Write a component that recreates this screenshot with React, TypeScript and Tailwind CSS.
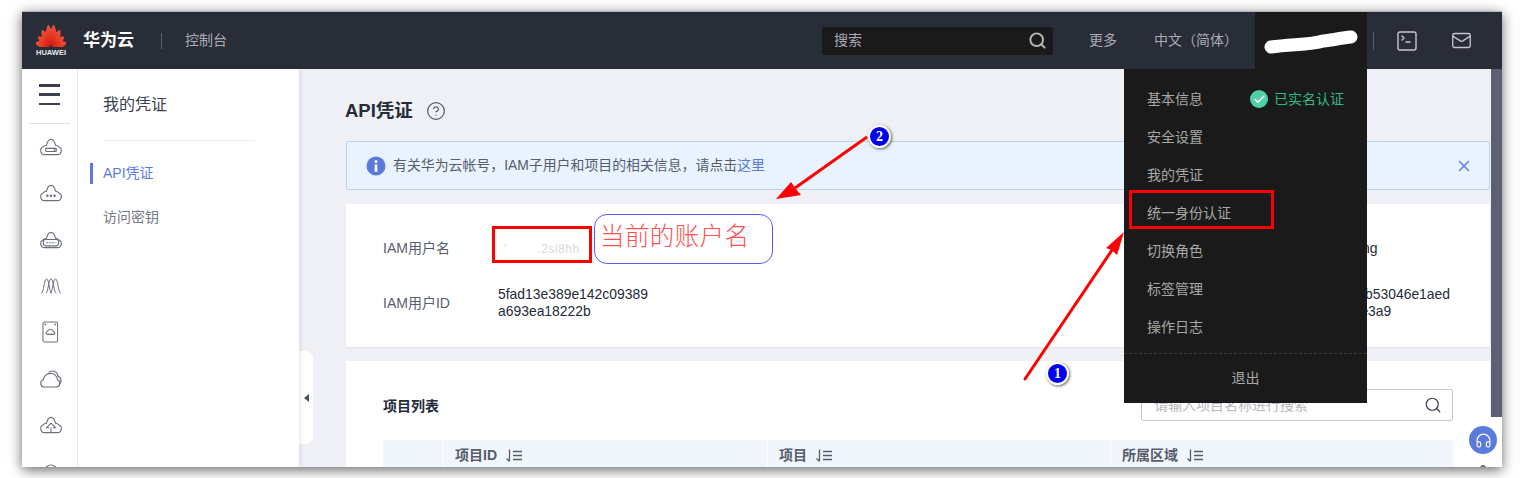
import { Search, SquareTerminal, Mail, CircleHelp, X, Check, Headphones } from "lucide-react";

const stroke = "#6a6e7a";

function Cloud({ children }: { children?: React.ReactNode }) {
  return (
    <svg width="24" height="18" viewBox="0 0 26 20" fill="none" stroke={stroke} strokeWidth="1.200">
      <path d="M6 18.500h14a4.500 4.500 0 0 0 2-8.500C21 8.800 19.500 8 18 8 17 4 15 1.500 13 1.500S9 4 8 8C6.500 8 5 8.800 4 10a4.500 4.500 0 0 0 2 8.500z" />
      {children}
    </svg>
  );
}

const railIcons = [
  <Cloud key="a"><rect x="7" y="11.500" width="12" height="3.500" rx="1" /><circle cx="17" cy="13.200" r="0.400" /></Cloud>,
  <Cloud key="b"><circle cx="9" cy="13" r="0.800" fill={stroke} /><circle cx="13" cy="13" r="0.800" fill={stroke} /><circle cx="17" cy="13" r="0.800" fill={stroke} /></Cloud>,
  <Cloud key="c"><rect x="4.500" y="9.500" width="17" height="7" rx="2.500" /><path d="M8 13h10" strokeDasharray="2 1" /></Cloud>,
  <svg key="d" width="22" height="16" viewBox="0 0 24 18" fill="none" stroke={stroke} strokeWidth="1.100">
    <path d="M1 17C4 17 4 1 7 1s3 16 6 16" />
    <path d="M6 17C9 17 9 1 12 1s3 16 6 16" />
    <path d="M11 17c3 0 3-16 6-16s3 16 6 16" />
  </svg>,
  <svg key="e" width="17" height="22" viewBox="0 0 18 23" fill="none" stroke={stroke} strokeWidth="1.100">
    <rect x="1" y="1" width="15.500" height="21" rx="1.800" />
    <path d="M6 14h6a1.500 1.500 0 0 0 .300-3C11.800 9.500 10.500 8.500 9 8.500S6.200 9.500 5.700 11A1.500 1.500 0 0 0 6 14z" />
    <circle cx="3.500" cy="3.500" r="0.400" /><circle cx="14" cy="3.500" r="0.400" />
  </svg>,
  <svg key="f" width="23" height="18" viewBox="0 0 24 19" fill="none" stroke={stroke} strokeWidth="1.200">
    <path d="M5 18h13a4 4 0 0 0 1.400-7.700C18.800 6.500 15.800 3.500 12 3.500S5 6.500 4.400 10.300A4 4 0 0 0 5 18z" />
    <path d="M10 2.500c1-1 2-1.500 3.500-1.500 3.500 0 6 2.500 6.500 5.500 2.500 1 3.500 3 3 6-.2 1-1 2-2 2.500" />
  </svg>,
  <Cloud key="g"><path d="M13 18.500V13M13 8l-5 5h3M13 8l5 5h-3" /></Cloud>,
  <svg key="h" width="24" height="20" viewBox="0 0 24 20" fill="none" stroke={stroke} strokeWidth="1.200"><circle cx="12" cy="10" r="6" /></svg>,
];

function SortIcon() {
  return (
    <svg width="18" height="13" viewBox="0 0 18 13" fill="none" stroke="#575d6c" strokeWidth="1.300" className="ml-[8px]">
      <path d="M4.500 0.500v11.500M1.500 9.500l3 3" />
      <path d="M8 2.500h9M8 6.500h9M8 10.500h9" />
    </svg>
  );
}

function HuaweiLogo() {
  const angles = [-80, -56, -33, -11, 11, 33, 56, 80];
  return (
    <svg width="30" height="23" viewBox="0 0 30 23" className="block">
      <defs>
        <linearGradient id="pet" x1="0" y1="0" x2="0" y2="1">
          <stop offset="0" stopColor="#f4553a" />
          <stop offset="1" stopColor="#d41a12" />
        </linearGradient>
      </defs>
      {angles.map((a) => {
        const abs = Math.abs(a);
        const d =
          abs < 20
            ? "M0 -1C-5 -7 -5 -15 -1.500 -22C4 -16 4.500 -7 0 -1z"
            : abs < 40
              ? "M0 -1C-5 -6 -5 -13 -1.500 -19C4 -14 4.500 -6 0 -1z"
              : "M0 -1C-5 -5 -5 -11 -1 -16.500C4 -12 4.500 -5 0 -1z";
        return <path key={a} d={d} fill="url(#pet)" transform={`translate(15 22.500) rotate(${a})${a < 0 ? " scale(-1 1)" : ""}`} />;
      })}
    </svg>
  );
}

const menuItems = ["基本信息", "安全设置", "我的凭证", "统一身份认证", "切换角色", "标签管理", "操作日志"];
const columns = [
  { w: "w-[60px]", t: "" },
  { w: "w-[324px]", t: "项目ID" },
  { w: "w-[343px]", t: "项目" },
  { w: "w-[343px]", t: "所属区域" },
];

export default function App() {
  return (
    <div className="relative w-[1521px] h-[478px] overflow-hidden bg-white font-['Liberation_Sans','Noto_Sans_CJK_SC',sans-serif]">
      <div className="absolute left-[22px] top-[11px] w-[1480px] h-[456px] flex flex-col overflow-hidden shadow-[0_3px_12px_rgba(0,0,0,0.6)] border-t border-[#b5b5b5]">
        {/* header */}
        <header className="h-[57px] shrink-0 bg-[#292d38] flex items-center text-[14px] text-[#a9acb4]">
          <div className="ml-[14px] w-[30px] flex flex-col items-center">
            <HuaweiLogo />
            <span className="text-[7.500px] leading-[9px] mt-[1px] text-[#e8e8e8] font-bold">HUAWEI</span>
          </div>
          <span className="ml-[17px] w-[52px] text-[17px] font-bold text-white">华为云</span>
          <span className="ml-[26px] w-px h-[16px] bg-[#5a5e6a]" />
          <span className="ml-[23px] w-[42px]">控制台</span>
          <div className="ml-[595px] w-[231px] h-[28px] rounded-[2px] bg-[#1a1a1a] flex items-center justify-between pl-[12px] pr-[6px]">
            <span>搜索</span>
            <Search size={19} strokeWidth={2.500} className="text-[#b5b5b5]" />
          </div>
          <span className="ml-[36px] w-[28px]">更多</span>
          <span className="ml-[37px] w-[101px]">中文（简体）</span>
          <div className="w-[112px] shrink-0" />
          <span className="ml-[6px] w-px h-[18px] bg-[#5a5e6a]" />
          <SquareTerminal size={24} strokeWidth={1.400} className="ml-[21px] text-[#c5c7cc]" />
          <Mail size={21} strokeWidth={1.500} className="ml-[32px] text-[#c5c7cc]" />
        </header>

        {/* body */}
        <div className="flex flex-1 min-h-0">
          {/* rail */}
          <nav className="w-[56px] shrink-0 bg-white border-r border-[#e9ebf0] flex flex-col items-center overflow-hidden">
            <div className="mt-[15px] w-[21px] h-[21px] shrink-0 flex flex-col justify-between">
              <span className="h-[2.500px] bg-[#3a3f50]" />
              <span className="h-[2.500px] bg-[#3a3f50]" />
              <span className="h-[2.500px] bg-[#3a3f50]" />
            </div>
            <div className="mt-[18px] w-[41px] h-px shrink-0 bg-[#dfe1e6]" />
            <div className="flex flex-col items-center w-full pl-[2px] shrink-0">
              {railIcons.map((icon, i) => (
                <div key={i} className="h-[46.300px] w-full shrink-0 flex items-center justify-center">{icon}</div>
              ))}
            </div>
          </nav>

          {/* sub nav */}
          <aside className="w-[221px] shrink-0 bg-white shadow-[2px_0_4px_rgba(0,0,0,0.08)] z-10 pl-[25px]">
            <div className="mt-[25px] text-[16px] leading-[22px] text-[#3c4250]">我的凭证</div>
            <div className="mt-[24px] w-[152px] h-px bg-[#e9ebf0]" />
            <div className="mt-[22px] -ml-[13px] flex items-center h-[21px] text-[14px] text-[#5b7bdb]">
              <span className="w-[3px] h-[21px] bg-[#5b7bdb]" />
              <span className="ml-[10px]">API凭证</span>
            </div>
            <div className="mt-[23px] text-[14px] leading-[21px] text-[#757a85]">访问密钥</div>
          </aside>

          {/* main */}
          <main className="flex-1 min-w-0 bg-[#eef0f5] pl-[47px] pr-px pt-[30px] overflow-hidden relative">
            <div className="flex items-center h-[24px]">
              <h1 className="-ml-px text-[18.500px] font-bold text-[#252b3a]">API凭证</h1>
              <CircleHelp size={20} strokeWidth={1.500} className="ml-[13px] text-[#575d6c]" />
            </div>
            <div className="mt-[18px] h-[49px] rounded-[2px] border border-[#bcd0f3] bg-[#e8f3ff] flex items-center pl-[19px] pr-[16px] text-[14px] text-[#575d6c]">
              <svg width="20" height="20" viewBox="0 0 20 20" className="shrink-0">
                <circle cx="10" cy="10" r="9.500" fill="#5b7bdb" />
                <circle cx="10" cy="5.500" r="1.500" fill="#fff" />
                <rect x="8.700" y="8.300" width="2.600" height="7.500" fill="#fff" />
              </svg>
              <span className="ml-[7px] text-[13.900px]">有关华为云帐号，IAM子用户和项目的相关信息，请点击<span className="text-[#5b7bdb]">这里</span></span>
              <X size={18} strokeWidth={1.800} className="ml-auto text-[#5b7bdb]" />
            </div>
            <section className="mt-[14px] h-[143px] bg-white pl-[37px] pt-[26px] shadow-[0_1px_2px_rgba(0,0,0,0.06)] text-[14px]">
              <div className="flex h-[36px] items-center">
                <span className="w-[115px] shrink-0 text-[#575d6c]">IAM用户名</span>
                <div className="flex-1">
                  <span className="ml-[6px] text-[12px] text-[#d8d8d8] tracking-[0.500px] whitespace-pre">{"'        .2sl8hh"}</span>
                </div>
                <span className="w-[152px] shrink-0 text-[#252b3a] pl-[24px]">ng</span>
              </div>
              <div className="flex mt-[20px] items-center">
                <span className="w-[115px] shrink-0 text-[#575d6c]">IAM用户ID</span>
                <div className="flex-1 text-[#252b3a] leading-[17px] text-[13.900px]">5fad13e389e142c09389<br />a693ea18222b</div>
                <div className="w-[152px] shrink-0 text-[#252b3a] leading-[17px] text-[13.900px]">4a0fb53046e1aed<br />a0ce3a9</div>
              </div>
            </section>
            <section className="mt-[14px] bg-white h-[200px] px-[37px] pt-[28px]">
              <div className="flex items-center justify-between h-[32px]">
                <h2 className="text-[14px] font-bold text-[#252b3a] translate-y-px">项目列表</h2>
                <div className="w-[312px] h-[32px] border border-[#c6c8ce] rounded-[2px] flex items-center justify-between pl-[12px] pr-[10px]">
                  <span className="text-[14px] text-[#b5b8c0]">请输入项目名称进行搜索</span>
                  <Search size={18} strokeWidth={1.600} className="text-[#3a3f50]" />
                </div>
              </div>
              <div className="mt-[19px] flex h-[36px] bg-[#f1f5fc] text-[14px] font-bold text-[#575d6c]">
                {columns.map((c, i) => (
                  <div key={i} className={`${c.w} flex items-center pl-[11px] pb-[6px] ${i > 0 ? "border-l border-white" : ""}`}>
                    {c.t && <span>{c.t}</span>}
                    {c.t && <SortIcon />}
                  </div>
                ))}
              </div>
            </section>
            {/* collapse tab */}
            <div className="absolute left-0 top-[282px] w-[14px] h-[93px] bg-white rounded-r-[8px] flex items-center pl-[5px]">
              <span className="w-0 h-0 border-y-[4.500px] border-y-transparent border-r-[5px] border-r-[#4a5060]" />
            </div>
          </main>
          <div className="w-[11px] shrink-0 bg-[#5c6072]" />
        </div>
      </div>

      {/* floating help */}
      <div className="absolute left-[1465px] top-[417px] w-[37px] h-[50px] bg-white pl-[4px] pt-[9px] overflow-hidden">
        <div className="w-[28px] h-[28px] rounded-full bg-[#5b7bdb] flex items-center justify-center">
          <Headphones size={17} strokeWidth={1.600} className="text-white" />
        </div>
        <div className="mt-[11px] ml-[11px] w-[6px] h-[6px] rounded-full bg-[#6a6e7a]" />
      </div>

      {/* account dropdown */}
      <div className="absolute left-[1255px] top-[12px] w-[112px] h-[57px] bg-[#1a1a1a]">
        <svg width="112" height="57" viewBox="0 0 112 57" className="block">
          <path d="M16 35C35 32 55 33 68 29c10-1 18-3 28-4" fill="none" stroke="#fff" strokeWidth="13" strokeLinecap="round" />
        </svg>
      </div>
      <div className="absolute left-[1124px] top-[69px] w-[243px] h-[334px] bg-[#1a1a1a] pt-[11px] text-[14px] text-[#a8a8a8] flex flex-col">
        {menuItems.map((m, i) => (
          <div key={m} className="h-[38px] shrink-0 pl-[23px] pr-[23px] flex items-center justify-between">
            <span>{m}</span>
            {i === 0 && (
              <span className="flex items-center text-[#30b884]">
                <span className="w-[18px] h-[18px] rounded-full bg-[#50d0a8] flex items-center justify-center mr-[6px]">
                  <Check size={13} strokeWidth={3} className="text-white" />
                </span>
                已实名认证
              </span>
            )}
          </div>
        ))}
        <div className="mt-[7px] border-t border-dashed border-[#3a3a3a] h-[49px] flex items-center justify-center">退出</div>
      </div>

      {/* annotations */}
      <div className="absolute left-[492px] top-[226px] w-[100px] h-[37px] border-[3px] border-[#ff0000]" />
      <div className="absolute left-[1129px] top-[190px] w-[145px] h-[39px] border-[3px] border-[#ff0000]" />
      <div className="absolute left-[594px] top-[214px] w-[179px] h-[50px] rounded-[13px] border border-[#5a5aff] bg-white pl-[5px] pt-[2px] text-[24.500px] tracking-[0.400px] leading-[36px] font-light text-[#ff5050] font-['Noto_Sans_CJK_SC',sans-serif]">
        当前的账户名
      </div>
      <svg width="1521" height="478" viewBox="0 0 1521 478" className="absolute left-0 top-0 pointer-events-none">
        <path d="M1025 379L1112 250" stroke="#ff0000" strokeWidth="3" strokeLinecap="round" fill="none" />
        <path d="M1124 232L1106 248L1111.500 250L1117 255z" fill="#ff0000" />
        <path d="M867 137L795 188" stroke="#ff0000" strokeWidth="3" fill="none" />
        <path d="M776 199L791 182L795 188L801 195z" fill="#ff0000" />
      </svg>
      {[{ n: "1", c: "left-[1046px] top-[362px]" }, { n: "2", c: "left-[868px] top-[125px]" }].map((b) => (
        <div
          key={b.n}
          className={`absolute ${b.c} w-[23px] h-[23px] rounded-full bg-[#0000f0] border-[2px] border-white shadow-[1px_1px_3px_rgba(0,0,0,0.6)] flex items-center justify-center text-white text-[14px] font-bold font-['Liberation_Serif',serif]`}
        >
          {b.n}
        </div>
      ))}
    </div>
  );
}
